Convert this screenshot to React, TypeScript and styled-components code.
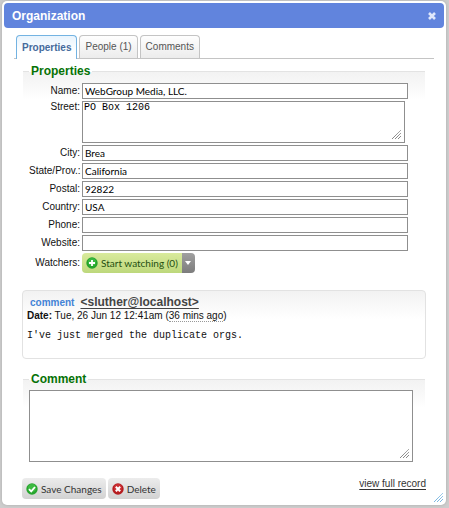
import React, { useState } from "react";
import styled, { createGlobalStyle, css } from "styled-components";

const sans = '"Liberation Sans", Arial, sans-serif';
const humanist = 'Lato, "Noto Sans", sans-serif';
const mono = '"Liberation Mono", "Courier New", monospace';

const GlobalStyle = createGlobalStyle`
  *, *::before, *::after { box-sizing: border-box; }
  body {
    margin: 0;
    background: #cdcdcd;
    color: #111;
    font: 10px/12px ${sans};
  }
`;

const Backdrop = styled.div`
  display: flex;
  min-height: 100vh;
  padding: 1px 3px 3px 2px;
`;

const Dialog = styled.section`
  position: relative;
  flex: 1;
  min-width: 0;
  padding: 2px;
  border-radius: 5px;
  background: #fff;
  box-shadow: 0 0 3px #aaa;
`;

const TitleBar = styled.header`
  display: flex;
  align-items: center;
  justify-content: space-between;
  height: 25px;
  padding: 0 8px;
  border-radius: 4px;
  background: #6184dd;
  color: #fff;
`;

const Title = styled.h1`
  margin: 0;
  font: bold 12px/16px ${sans};
`;

const CloseButton = styled.button`
  display: flex;
  padding: 0;
  border: 0;
  background: none;
`;

const Content = styled.div`
  padding: 7px 10px 0;
`;

const TabList = styled.div`
  display: flex;
  align-items: flex-end;
  gap: 2px;
  padding: 0 2px;
  border-bottom: 1px solid #c4c4c4;
`;

const Tab = styled.button<{ $active: boolean }>`
  height: 23px;
  padding: 0 5px;
  border: 1px solid #c4c4c4;
  border-bottom: 0;
  border-radius: 4px 4px 0 0;
  background: linear-gradient(#fefefe, #ececec);
  color: #555;
  font: 10px/12px ${sans};
  ${(p) =>
    p.$active &&
    css`
      height: 24px;
      margin-bottom: -1px;
      border-color: #73b3e2;
      background: linear-gradient(#e9f4fd, #fff 70%);
      color: #456a9c;
      font-weight: bold;
    `}
`;

const Panel = styled.div`
  padding: 4px 8px 0;
`;

const Group = styled.fieldset`
  min-width: 0;
  margin: 0 1px;
  border: 0;
  border-top: 1px solid #e3e3e3;
  padding: 4px 17px 0 6px;
  background: linear-gradient(#f2f2f2, #fff 28px);
`;

const CommentGroup = styled(Group)`
  padding: 3px 12px 0 6px;
`;

const Legend = styled.legend`
  padding: 0 2px;
  color: #067206;
  font: bold 12px/16px ${sans};
`;

const Fields = styled.div`
  display: grid;
  gap: 2px;
`;

const Field = styled.div`
  display: grid;
  grid-template-columns: 51px minmax(0, 1fr);
  column-gap: 2px;
`;

const Label = styled.label<{ $gap?: number }>`
  padding-top: ${(p) => p.$gap ?? 2}px;
  text-align: right;
  white-space: nowrap;
`;

const TextInput = styled.input`
  width: 100%;
  height: 16px;
  padding: 0 2px;
  border: 1px solid #8f8f8f;
  border-radius: 0;
  outline: 0;
  background: #fff;
  color: #000;
  font: 10px/14px ${humanist};
`;

const AreaFrame = styled.div<{ $inset?: boolean }>`
  position: relative;
  display: flex;
  margin-right: ${(p) => (p.$inset ? "3px" : "0")};
`;

const TextArea = styled.textarea<{ $tall?: boolean }>`
  display: block;
  width: 100%;
  height: ${(p) => (p.$tall ? "72px" : "42px")};
  padding: 0 1px;
  border: 1px solid #8f8f8f;
  border-radius: 0;
  outline: 0;
  resize: none;
  background: #fff;
  color: #000;
  font: 10px/12px ${mono};
`;

const AreaGrip = styled.span`
  position: absolute;
  right: 4px;
  bottom: 4px;
  display: flex;
  color: #777;
`;

const DialogGrip = styled.span`
  position: absolute;
  right: 3px;
  bottom: 3px;
  display: flex;
  color: #67acdd;
`;

const SplitButton = styled.div`
  display: flex;
  width: max-content;
  height: 20px;
  overflow: hidden;
  border-radius: 4px;
`;

const WatchButton = styled.button`
  display: flex;
  align-items: center;
  gap: 3px;
  padding: 0 4px;
  border: 0;
  background: linear-gradient(#d9ea9c, #bdd87c);
  color: #244f10;
  font: 10px/14px ${humanist};
`;

const MenuButton = styled.button`
  display: flex;
  align-items: center;
  justify-content: center;
  width: 13px;
  padding: 0;
  border: 0;
  background: linear-gradient(#a0a0a0, #7c7c7c);
`;

const CommentCard = styled.article`
  margin: 17px 0 12px;
  min-height: 69px;
  padding: 4px 4px 14px;
  border: 1px solid #e2e2e2;
  border-radius: 4px;
  background: linear-gradient(#f2f2f2, #fff 28px);
`;

const CommentHeading = styled.div`
  display: flex;
  align-items: baseline;
  gap: 6px;
  padding-left: 3px;
  font: bold 12px/15px ${sans};
`;

const Kind = styled.span`
  color: #4383d6;
  font-size: 10px;
`;

const Author = styled.a`
  color: #444;
  text-underline-offset: 2px;
`;

const DateLine = styled.div`
  line-height: 12px;
`;

const Ago = styled.time`
  border-bottom: 1px dotted #999;
`;

const Body = styled.p`
  margin: 8px 0 0;
  font: 10px/12px ${mono};
`;

const Footer = styled.footer`
  display: flex;
  align-items: flex-start;
  gap: 2px;
  padding: 16px 0 4px;
`;

const ActionButton = styled.button`
  display: flex;
  align-items: center;
  gap: 3px;
  height: 21px;
  padding: 0 4px;
  border: 0;
  border-radius: 4px;
  background: linear-gradient(#ececec, #d2d2d2);
  color: #333;
  font: 10px/14px ${humanist};
`;

const RecordLink = styled.a`
  margin-left: auto;
  color: #333;
  text-underline-offset: 2px;
`;

const GripIcon = () => (
  <svg width="9" height="9" viewBox="0 0 9 9" stroke="currentColor" fill="none">
    <path d="M0 9L9 0M3 9L9 3M6 9L9 6" strokeDasharray="1.2 .3" />
  </svg>
);

const PlusIcon = () => (
  <svg width="12" height="12" viewBox="0 0 12 12">
    <circle cx="6" cy="6" r="5.7" fill="#25a32c" />
    <circle cx="6" cy="5" r="4" fill="#39b83f" />
    <path d="M6 3v6M3 6h6" stroke="#fff" strokeWidth="1.8" />
  </svg>
);

const CheckIcon = () => (
  <svg width="12" height="12" viewBox="0 0 12 12">
    <circle cx="6" cy="6" r="5.7" fill="#27a52e" />
    <circle cx="6" cy="5" r="4" fill="#3cba41" />
    <path d="M3 6.2L5.2 8.4L9 4" stroke="#fff" strokeWidth="1.8" fill="none" />
  </svg>
);

const DeleteIcon = () => (
  <svg width="12" height="12" viewBox="0 0 12 12">
    <circle cx="6" cy="6" r="5.7" fill="#b51d20" />
    <circle cx="6" cy="5" r="4" fill="#ca3034" />
    <path d="M3.8 3.8l4.4 4.4M8.2 3.8L3.8 8.2" stroke="#fff" strokeWidth="2" />
  </svg>
);

const CloseIcon = () => (
  <svg width="8" height="8" viewBox="0 0 8 8">
    <path d="M1 1l6 6M7 1L1 7" stroke="#dfe7fb" strokeWidth="2.6" />
  </svg>
);

const ArrowIcon = () => (
  <svg width="6" height="4" viewBox="0 0 6 4">
    <path d="M0 0h6L3 4z" fill="#fff" />
  </svg>
);

const tabs = ["Properties", "People (1)", "Comments"];

const fields = [
  { id: "name", label: "Name:", value: "WebGroup Media, LLC." },
  { id: "street", label: "Street:", value: "PO Box 1206", multiline: true },
  { id: "city", label: "City:", value: "Brea" },
  { id: "state", label: "State/Prov.:", value: "California" },
  { id: "postal", label: "Postal:", value: "92822" },
  { id: "country", label: "Country:", value: "USA" },
  { id: "phone", label: "Phone:", value: "" },
  { id: "website", label: "Website:", value: "" },
];

export default function App() {
  const [active, setActive] = useState(tabs[0]);

  return (
    <>
      <GlobalStyle />
      <Backdrop>
        <Dialog role="dialog" aria-labelledby="dialog-title">
          <TitleBar>
            <Title id="dialog-title">Organization</Title>
            <CloseButton type="button" aria-label="Close">
              <CloseIcon />
            </CloseButton>
          </TitleBar>
          <Content>
            <TabList role="tablist">
              {tabs.map((tab) => (
                <Tab
                  key={tab}
                  type="button"
                  role="tab"
                  aria-selected={tab === active}
                  $active={tab === active}
                  onClick={() => setActive(tab)}
                >
                  {tab}
                </Tab>
              ))}
            </TabList>
            <Panel role="tabpanel">
              <Group>
                <Legend>Properties</Legend>
                <Fields>
                  {fields.map((f) => (
                    <Field key={f.id}>
                      <Label htmlFor={f.id} $gap={f.multiline ? 0 : 2}>
                        {f.label}
                      </Label>
                      {f.multiline ? (
                        <AreaFrame $inset>
                          <TextArea id={f.id} defaultValue={f.value} />
                          <AreaGrip>
                            <GripIcon />
                          </AreaGrip>
                        </AreaFrame>
                      ) : (
                        <TextInput id={f.id} type="text" defaultValue={f.value} />
                      )}
                    </Field>
                  ))}
                  <Field>
                    <Label htmlFor="watch" $gap={4}>
                      Watchers:
                    </Label>
                    <SplitButton>
                      <WatchButton id="watch" type="button">
                        <PlusIcon />
                        Start watching (0)
                      </WatchButton>
                      <MenuButton type="button" aria-label="Show watchers">
                        <ArrowIcon />
                      </MenuButton>
                    </SplitButton>
                  </Field>
                </Fields>
              </Group>
              <CommentCard>
                <CommentHeading>
                  <Kind>comment</Kind>
                  <Author href="#author">&lt;sluther@localhost&gt;</Author>
                </CommentHeading>
                <DateLine>
                  <b>Date:</b> Tue, 26 Jun 12 12:41am (<Ago>36 mins ago</Ago>)
                </DateLine>
                <Body>I've just merged the duplicate orgs.</Body>
              </CommentCard>
              <CommentGroup>
                <Legend>Comment</Legend>
                <AreaFrame>
                  <TextArea $tall aria-label="Comment" />
                  <AreaGrip>
                    <GripIcon />
                  </AreaGrip>
                </AreaFrame>
              </CommentGroup>
              <Footer>
                <ActionButton type="button">
                  <CheckIcon />
                  Save Changes
                </ActionButton>
                <ActionButton type="button">
                  <DeleteIcon />
                  Delete
                </ActionButton>
                <RecordLink href="#record">view full record</RecordLink>
              </Footer>
            </Panel>
          </Content>
          <DialogGrip>
            <GripIcon />
          </DialogGrip>
        </Dialog>
      </Backdrop>
    </>
  );
}
